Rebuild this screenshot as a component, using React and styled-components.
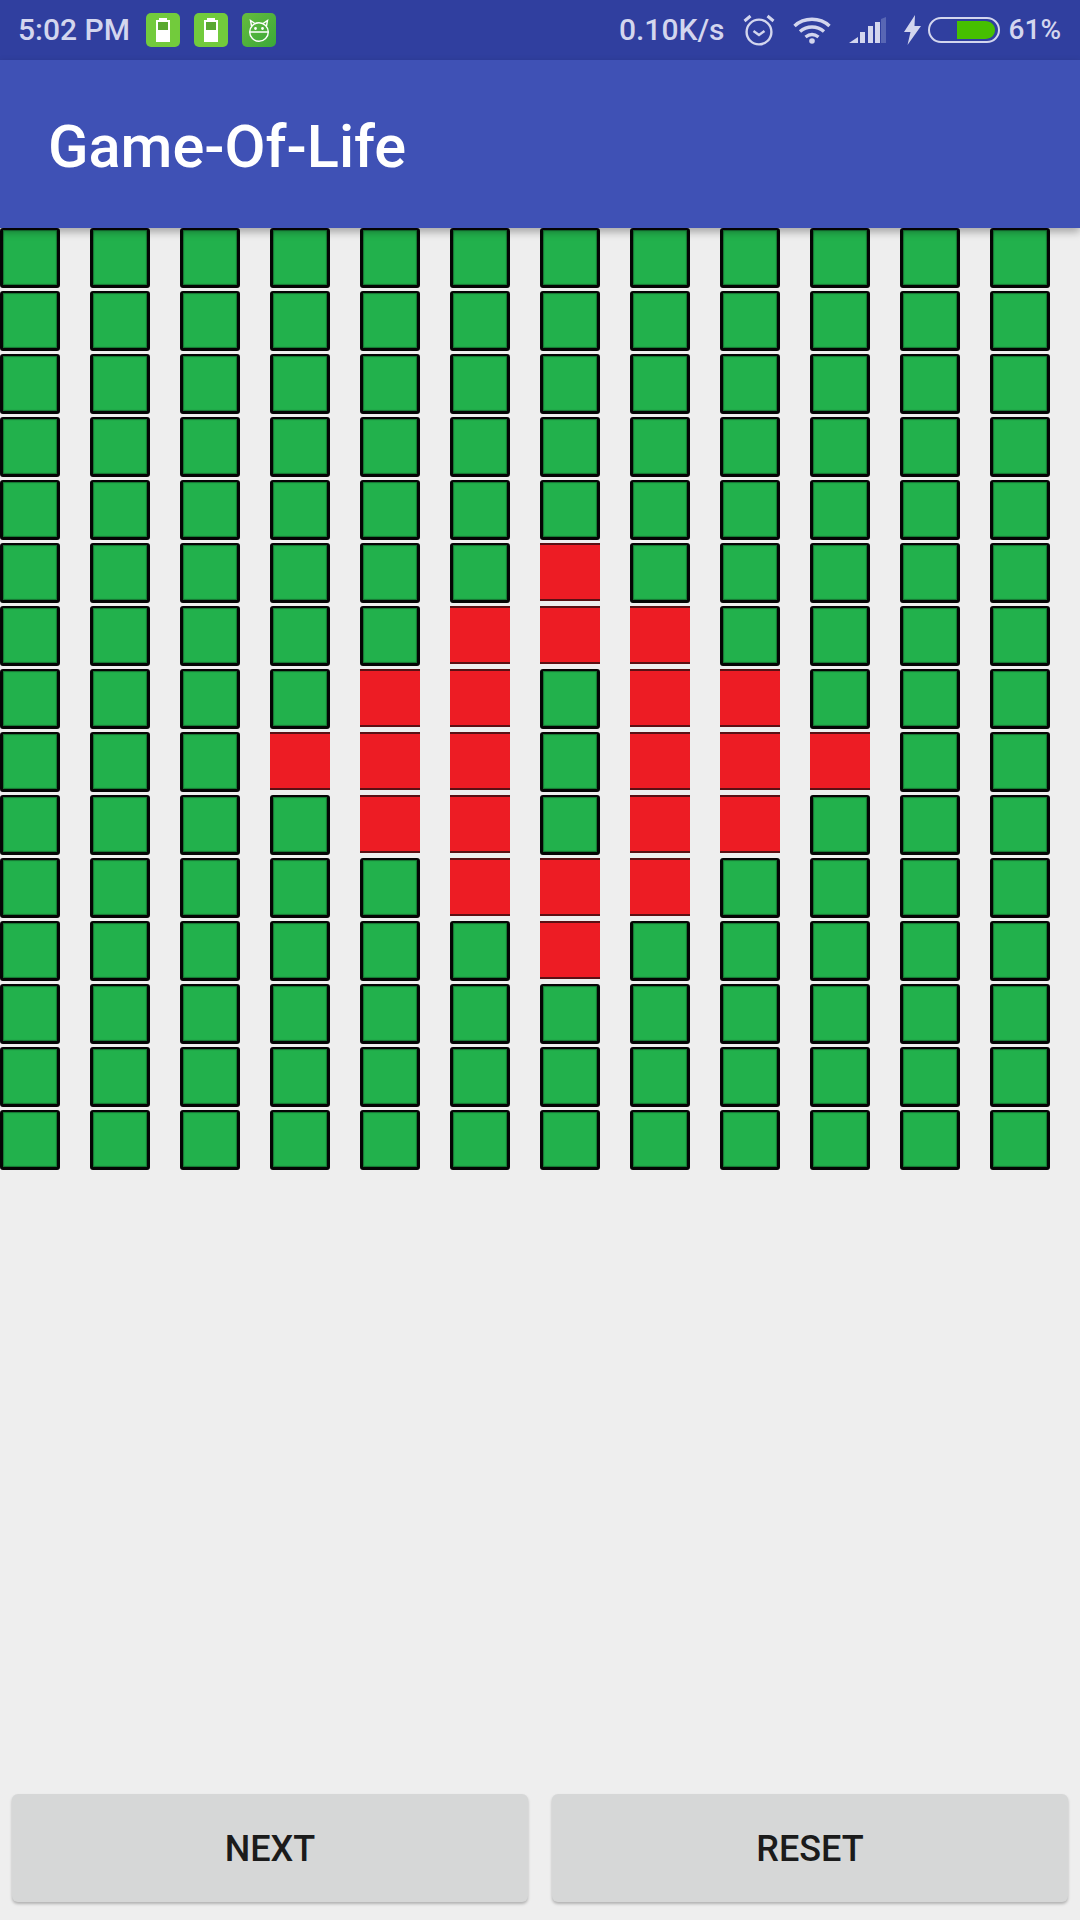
import React from 'react'
import styled, { createGlobalStyle } from 'styled-components'

const GlobalStyle = createGlobalStyle`
  html, body {
    margin: 0;
    padding: 0;
    background: #eeeeee;
  }
  * {
    box-sizing: border-box;
  }
`

const COLS = 12
const ROWS = 15
const ALIVE = {
  5: [6],
  6: [5, 6, 7],
  7: [4, 5, 7, 8],
  8: [3, 4, 5, 7, 8, 9],
  9: [4, 5, 7, 8],
  10: [5, 6, 7],
  11: [6]
}

const Page = styled.div`
  width: 1080px;
  height: 1920px;
  display: flex;
  flex-direction: column;
  background: #eeeeee;
  font-family: Roboto, "Noto Sans", sans-serif;
  overflow: hidden;
`

const StatusBar = styled.div`
  height: 60px;
  flex: none;
  display: flex;
  align-items: center;
  padding: 0 19px 0 18px;
  background: #303f9f;
  color: #d3d6ee;
  font-size: 30px;
  font-weight: 500;
`

const StatusText = styled.span`
  line-height: 62px;
  white-space: nowrap;
  margin-left: ${props => props.$left || 0}px;
  font-size: ${props => props.$size || 30}px;
`

const NotifyIcon = styled.div`
  width: 34px;
  height: 34px;
  margin-left: ${props => props.$left}px;
  border-radius: 5px;
  background: ${props => props.$bg};
  display: flex;
  align-items: center;
  justify-content: center;
`

const Spacer = styled.div`
  flex: 1;
`

const IconSlot = styled.svg`
  display: block;
  flex: none;
  margin-left: ${props => props.$left}px;
`

const AppBar = styled.header`
  height: 168px;
  flex: none;
  display: flex;
  align-items: center;
  padding: 5px 0 0 48px;
  background: #3f51b5;
  color: #ffffff;
  font-size: 59.5px;
  font-weight: 500;
  position: relative;
  z-index: 2;
  box-shadow: 0 4px 8px rgba(0, 0, 0, 0.3);
`

const Board = styled.div`
  display: grid;
  grid-template-columns: repeat(${COLS}, 60px);
  grid-auto-rows: 60px;
  column-gap: 30px;
  row-gap: 3px;
  flex: none;
`

const Cell = styled.div`
  width: 60px;
  height: ${props => (props.$alive ? 58 : 60)}px;
  background: ${props => (props.$alive ? '#ed1c24' : '#22b14c')};
  border-style: solid;
  border-width: ${props => (props.$alive ? '2px 0' : '2px 3px 3px')};
  border-color: ${props => (props.$alive ? '#5a1014' : '#050505')};
  border-radius: ${props => (props.$alive ? 0 : 3)}px;
  box-shadow: ${props => (props.$alive ? 'none' : 'inset 0 0 1px 1px rgba(0, 0, 0, 0.35)')};
`

const Footer = styled.div`
  margin-top: auto;
  display: flex;
  gap: 24px;
  padding: 0 12px 18px;
`

const ActionButton = styled.button`
  flex: 1;
  height: 108px;
  padding: 2px 0 0;
  border: 0;
  border-radius: 6px;
  background: #d6d7d7;
  color: #1b1b1b;
  font-family: inherit;
  font-size: 36px;
  font-weight: 500;
  box-shadow: 0 2px 3px rgba(0, 0, 0, 0.25);
`

const BatteryGlyph = () => (
  <svg width="14" height="24" viewBox="0 0 14 24">
    <rect x="3" y="0" width="8" height="2" fill="#fff" />
    <rect x="1" y="3" width="12" height="20" fill="#5aa832" stroke="#fff" strokeWidth="2" />
    <rect x="1" y="12" width="12" height="11" fill="#fff" />
  </svg>
)

const RobotGlyph = () => (
  <svg width="22" height="24" viewBox="0 0 22 24" fill="none" stroke="#fff" strokeWidth="1.4">
    <circle cx="11" cy="14" r="9.3" />
    <path d="M3.5 8 L2.5 2.5 L7 5.5 M18.5 8 L19.5 2.5 L15 5.5 M1.7 14 H20.3" />
    <circle cx="7.5" cy="10.5" r="0.7" fill="#fff" />
    <circle cx="14.5" cy="10.5" r="0.7" fill="#fff" />
  </svg>
)

const AlarmIcon = () => (
  <IconSlot $left={18} width="32" height="32" viewBox="0 0 32 32" fill="none" stroke="#d3d6ee" strokeWidth="2.4">
    <circle cx="16" cy="18" r="12.4" />
    <path d="M10.5 17 L16 21 L21.5 17" />
    <path d="M1.5 7 L7.5 2 M30.5 7 L24.5 2" strokeWidth="3" />
  </IconSlot>
)

const WifiIcon = () => (
  <IconSlot $left={18} width="38" height="28" viewBox="0 0 38 28" fill="none" stroke="#d3d6ee" strokeWidth="3.4">
    <path d="M1.5 10 C11 1 27 1 36.5 10" />
    <path d="M7 15.5 C14 9.5 24 9.5 31 15.5" />
    <path d="M12.5 21 C16.5 18 21.5 18 25.5 21" />
    <circle cx="19" cy="25" r="2.8" fill="#d3d6ee" stroke="none" />
  </IconSlot>
)

const SignalIcon = () => (
  <IconSlot $left={18} width="37" height="26" viewBox="0 0 37 26" fill="#d3d6ee">
    <path d="M0 26 L9 20 V26 Z" />
    <rect x="11" y="15" width="5" height="11" />
    <rect x="19" y="9" width="5" height="17" />
    <rect x="26" y="5" width="5" height="21" />
    <path d="M32 2 L37 0 V26 H32 Z" fill="#5866b4" />
  </IconSlot>
)

const BoltIcon = () => (
  <IconSlot $left={18} width="17" height="30" viewBox="0 0 17 30" fill="#d3d6ee">
    <path d="M11 0 L0 17 H6.5 L3.5 30 L17 11 H10.5 Z" />
  </IconSlot>
)

const BatteryIcon = () => (
  <IconSlot $left={7} width="72" height="26" viewBox="0 0 72 26">
    <rect x="1" y="1" width="70" height="24" rx="12" fill="none" stroke="#d3d6ee" strokeWidth="2" />
    <path d="M29 4 H57 C63 4 67 8 67 13 C67 18 63 22 57 22 H29 Z" fill="#46c000" />
  </IconSlot>
)

export default function App () {
  const rows = Array.from({ length: ROWS }, (_, r) => r)
  const cols = Array.from({ length: COLS }, (_, c) => c)

  return (
    <Page>
      <GlobalStyle />
      <StatusBar>
        <StatusText>5:02 PM</StatusText>
        <NotifyIcon $left={16} $bg="#72cb3c"><BatteryGlyph /></NotifyIcon>
        <NotifyIcon $left={14} $bg="#72cb3c"><BatteryGlyph /></NotifyIcon>
        <NotifyIcon $left={14} $bg="linear-gradient(135deg, #66bb3e, #3aa83a)"><RobotGlyph /></NotifyIcon>
        <Spacer />
        <StatusText>0.10K/s</StatusText>
        <AlarmIcon />
        <WifiIcon />
        <SignalIcon />
        <BoltIcon />
        <BatteryIcon />
        <StatusText $left={9} $size={28}>61%</StatusText>
      </StatusBar>
      <AppBar>Game-Of-Life</AppBar>
      <Board>
        {rows.map(r => cols.map(c => (
          <Cell key={`${r}-${c}`} $alive={(ALIVE[r] || []).includes(c)} />
        )))}
      </Board>
      <Footer>
        <ActionButton>NEXT</ActionButton>
        <ActionButton>RESET</ActionButton>
      </Footer>
    </Page>
  )
}
